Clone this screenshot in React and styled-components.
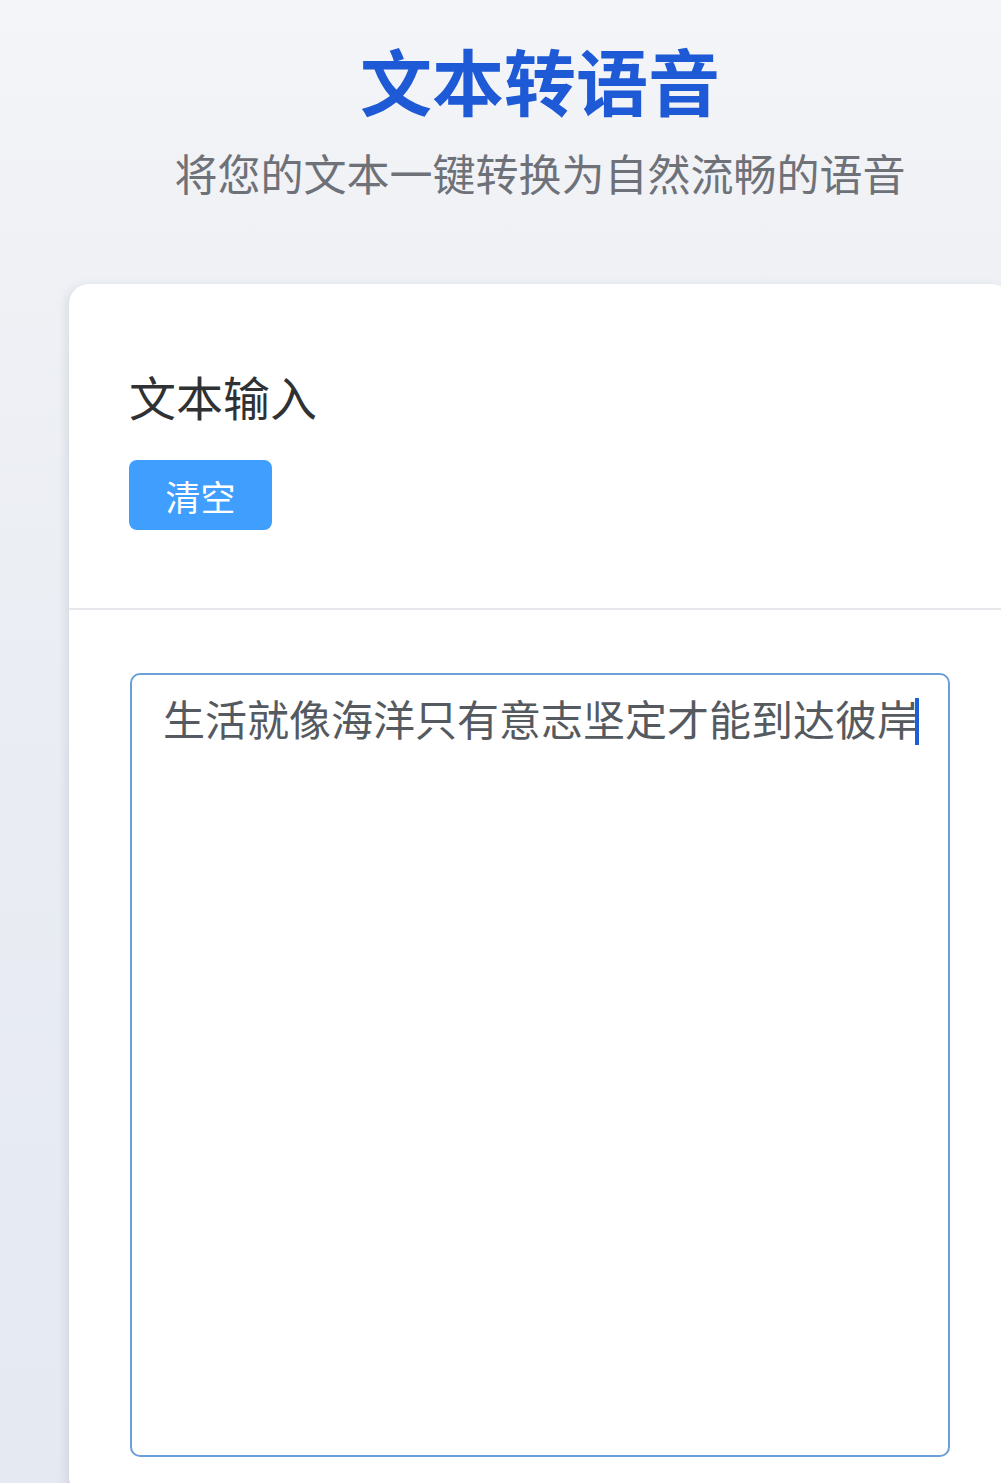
import React from "react";
import styled, { createGlobalStyle } from "styled-components";

const GlobalStyle = createGlobalStyle`
  html, body {
    margin: 0;
    padding: 0;
    overflow: hidden;
  }
  body {
    font-family: "Noto Sans CJK SC", "Noto Sans", sans-serif;
    background: #eceff5;
  }
`;

const Page = styled.div`
  width: 1080px;
  min-height: 1483px;
  box-sizing: border-box;
  padding: 43px 69px 0;
  background:
    linear-gradient(180deg, #f4f5f8 0px, #eff1f5 260px, #e9ecf3 800px, #e5e9f2 1483px);
`;

const Header = styled.header`
  display: flex;
  flex-direction: column;
  align-items: center;
`;

const Title = styled.h1`
  margin: 0;
  font-size: 72px;
  line-height: 1;
  font-weight: 700;
  color: #1e5ad6;
`;

const Subtitle = styled.p`
  margin: 36px 0 0;
  font-size: 43px;
  line-height: 1;
  letter-spacing: 0;
  font-weight: 400;
  color: #6e7178;
  white-space: nowrap;
`;

const Card = styled.section`
  margin-top: 90px;
  background: #ffffff;
  border-radius: 20px;
  box-shadow: -3px 2px 10px rgba(60, 72, 100, 0.12);
  overflow: hidden;
`;

const CardHead = styled.div`
  display: flex;
  flex-direction: column;
  align-items: flex-start;
  padding: 88px 60px 78px;
  border-bottom: 2px solid #e6e8ec;
`;

const CardTitle = styled.h2`
  margin: 0;
  font-size: 47px;
  line-height: 1;
  font-weight: 400;
  color: #303133;
`;

const Button = styled.button`
  margin-top: 41px;
  width: 143px;
  height: 70px;
  border: none;
  border-radius: 8px;
  background: #409eff;
  color: #ffffff;
  font-family: inherit;
  font-size: 35px;
  line-height: 1;
  cursor: pointer;
`;

const CardBody = styled.div`
  padding: 63px 61px 40px;
`;

const TextBox = styled.div`
  height: 784px;
  box-sizing: border-box;
  border: 2px solid #6a9fd8;
  border-radius: 10px;
  padding: 11px 12px 11px 31px;
  font-size: 42px;
  line-height: 1.5;
  color: #555a60;
  background: #fff;
`;

const Caret = styled.span`
  display: inline-block;
  width: 4px;
  height: 47px;
  margin-left: -4px;
  vertical-align: -9px;
  background: #1f5fd6;
`;

export default function App() {
  return (
    <>
      <GlobalStyle />
      <Page>
        <Header>
          <Title>文本转语音</Title>
          <Subtitle>将您的文本一键转换为自然流畅的语音</Subtitle>
        </Header>
        <Card>
          <CardHead>
            <CardTitle>文本输入</CardTitle>
            <Button>清空</Button>
          </CardHead>
          <CardBody>
            <TextBox role="textbox" aria-multiline="true">
              生活就像海洋只有意志坚定才能到达彼岸
              <Caret />
            </TextBox>
          </CardBody>
        </Card>
      </Page>
    </>
  );
}
